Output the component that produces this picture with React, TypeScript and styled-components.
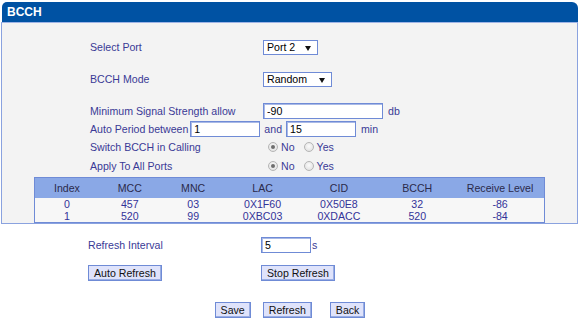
import React from "react";
import styled, { createGlobalStyle } from "styled-components";

const GlobalStyle = createGlobalStyle`
  html, body {
    margin: 0;
    padding: 0;
    background: #ffffff;
  }
  body {
    font-family: "Liberation Sans", Arial, sans-serif;
    font-size: 10.6px;
    color: #333399;
  }
`;

interface $Cell {
  w: number;
}

const columns = [
  { name: "Index", w: 64 },
  { name: "MCC", w: 62 },
  { name: "MNC", w: 65 },
  { name: "LAC", w: 74 },
  { name: "CID", w: 79 },
  { name: "BCCH", w: 78 },
  { name: "Receive Level", w: 88 },
];

const rows = [
  ["0", "457", "03", "0X1F60", "0X50E8", "32", "-86"],
  ["1", "520", "99", "0XBC03", "0XDACC", "520", "-84"],
];

const RadioPair = ({ checked }: { checked: "no" | "yes" }) => (
  <RadioGroup>
    <Radio $on={checked === "no"} />
    <RadioText>No</RadioText>
    <Radio $on={checked === "yes"} />
    <RadioText>Yes</RadioText>
  </RadioGroup>
);

const App = () => {
  return (
    <>
      <GlobalStyle />
      <Page>
        <Panel>
          <Header>BCCH</Header>
          <Body>
            <Row $gap={0}>
              <Label>Select Port</Label>
              <Select $w={55}>
                Port 2
                <Arrow />
              </Select>
            </Row>
            <Row $gap={16}>
              <Label>BCCH Mode</Label>
              <Select $w={69}>
                Random
                <Arrow />
              </Select>
            </Row>
            <Row $gap={16}>
              <Label>Minimum Signal Strength allow</Label>
              <Input $w={120}>-90</Input>
              <Unit>db</Unit>
            </Row>
            <Row $gap={2}>
              <InlineLabel>Auto Period between</InlineLabel>
              <Input $w={70}>1</Input>
              <Unit $left={4}>and</Unit>
              <Input $w={70} $left={4}>15</Input>
              <Unit>min</Unit>
            </Row>
            <Row $gap={2}>
              <Label>Switch BCCH in Calling</Label>
              <RadioPair checked="no" />
            </Row>
            <Row $gap={3}>
              <Label>Apply To All Ports</Label>
              <RadioPair checked="no" />
            </Row>
            <Table>
              <HeadRow>
                {columns.map((c) => (
                  <HeadCell key={c.name} w={c.w}>
                    {c.name}
                  </HeadCell>
                ))}
              </HeadRow>
              {rows.map((r, i) => (
                <DataRow key={i}>
                  {r.map((v, j) => (
                    <DataCell key={j} w={columns[j].w}>
                      {v}
                    </DataCell>
                  ))}
                </DataRow>
              ))}
            </Table>
          </Body>
        </Panel>
        <Lower>
          <Row $gap={0}>
            <Label>Refresh Interval</Label>
            <Input $w={50}>5</Input>
            <Unit $left={1}>s</Unit>
          </Row>
          <Row $gap={12}>
            <ButtonCell>
              <Button>Auto Refresh</Button>
            </ButtonCell>
            <Button>Stop Refresh</Button>
          </Row>
        </Lower>
        <Actions>
          <Button>Save</Button>
          <Button $left={12}>Refresh</Button>
          <Button $left={18}>Back</Button>
        </Actions>
      </Page>
    </>
  );
};

export default App;

const Page = styled.div`
  width: 580px;
  height: 318px;
  overflow: hidden;
  padding: 2px 2px 0 1px;
  box-sizing: border-box;
`;

const Panel = styled.div`
  display: flex;
  flex-direction: column;
`;

const Header = styled.div`
  height: 20px;
  margin-left: 1px;
  padding-left: 5px;
  background: #0052a3;
  border-radius: 5px 6px 0 0;
  color: #ffffff;
  font-weight: bold;
  font-size: 12px;
  line-height: 20px;
`;

const Body = styled.div`
  background: #f3f3f3;
  border: 1px solid #8aa2df;
  border-top-color: #9fb4e6;
  height: 202px;
  box-sizing: border-box;
  padding: 16px 0 0 88px;
`;

const Row = styled.div<{ $gap: number }>`
  display: flex;
  align-items: center;
  height: 16px;
  margin-top: ${({ $gap }) => $gap}px;
`;

const Label = styled.div`
  width: 173px;
  flex: 0 0 auto;
  color: #3a3a96;
  white-space: nowrap;
`;

const InlineLabel = styled.div`
  flex: 0 0 auto;
  margin-right: 2px;
  color: #3a3a96;
`;

const Input = styled.div<{ $w: number; $left?: number }>`
  width: ${({ $w }) => $w}px;
  height: 16px;
  margin-left: ${({ $left }) => $left || 0}px;
  box-sizing: border-box;
  background: #ffffff;
  border: 1px solid #6f8bd6;
  box-shadow: inset 1px 1px 0 #a9b9e6;
  padding-left: 3px;
  line-height: 14px;
  color: #000000;
`;

const Select = styled(Input)`
  position: relative;
  height: 15px;
  line-height: 13px;
  padding-left: 3px;
  box-shadow: none;
  border-color: #6f8bd6;
`;

const Arrow = styled.span`
  position: absolute;
  right: 6px;
  top: 5px;
  width: 0;
  height: 0;
  border-left: 3px solid transparent;
  border-right: 3px solid transparent;
  border-top: 5px solid #111111;
`;

const Unit = styled.span<{ $left?: number }>`
  margin-left: ${({ $left }) => ($left === undefined ? 5 : $left)}px;
  color: #3a3a96;
`;

const RadioGroup = styled.div`
  display: flex;
  align-items: center;
  padding-left: 5px;
`;

const Radio = styled.span<{ $on: boolean }>`
  position: relative;
  width: 10px;
  height: 10px;
  border-radius: 50%;
  box-sizing: border-box;
  border: 1px solid #b5b5b5;
  background: radial-gradient(circle at 50% 40%, #fbfbfb, #dcdcdc);
  &::after {
    content: "";
    display: ${({ $on }) => ($on ? "block" : "none")};
    position: absolute;
    left: 2px;
    top: 2px;
    width: 4px;
    height: 4px;
    border-radius: 50%;
    background: #6e6e6e;
  }
`;

const RadioText = styled.span`
  margin: 0 9px 0 3px;
  color: #3a3a96;
`;

const Table = styled.div`
  margin: 3px 0 0 -56px;
  width: 511px;
  box-sizing: border-box;
  border: 1px solid #6f8bd6;
  background: #f7f7f7;
`;

const HeadRow = styled.div`
  display: flex;
  height: 20px;
  background: #8aa8e6;
  align-items: center;
`;

const DataRow = styled.div`
  display: flex;
  height: 12px;
  align-items: center;
`;

const HeadCell = styled.div<$Cell>`
  width: ${({ w }) => w}px;
  text-align: center;
  color: #2a2a4a;
`;

const DataCell = styled(HeadCell)`
  color: #333399;
  line-height: 12px;
`;

const Lower = styled.div`
  padding: 13px 0 0 87px;
`;

const ButtonCell = styled.div`
  width: 173px;
  flex: 0 0 auto;
`;

const Button = styled.button<{ $left?: number }>`
  margin-left: ${({ $left }) => $left || 0}px;
  height: 16px;
  padding: 0 5px;
  font-family: "Liberation Sans", Arial, sans-serif;
  font-size: 10.6px;
  line-height: 13px;
  color: #111111;
  background: #dfe3fb;
  border: 1px solid #6f8bd6;
  box-shadow: inset -1px -1px 0 #9aaee3;
  border-radius: 0;
`;

const Actions = styled.div`
  display: flex;
  justify-content: center;
  margin-top: 21px;
  padding-left: 1px;
`;
